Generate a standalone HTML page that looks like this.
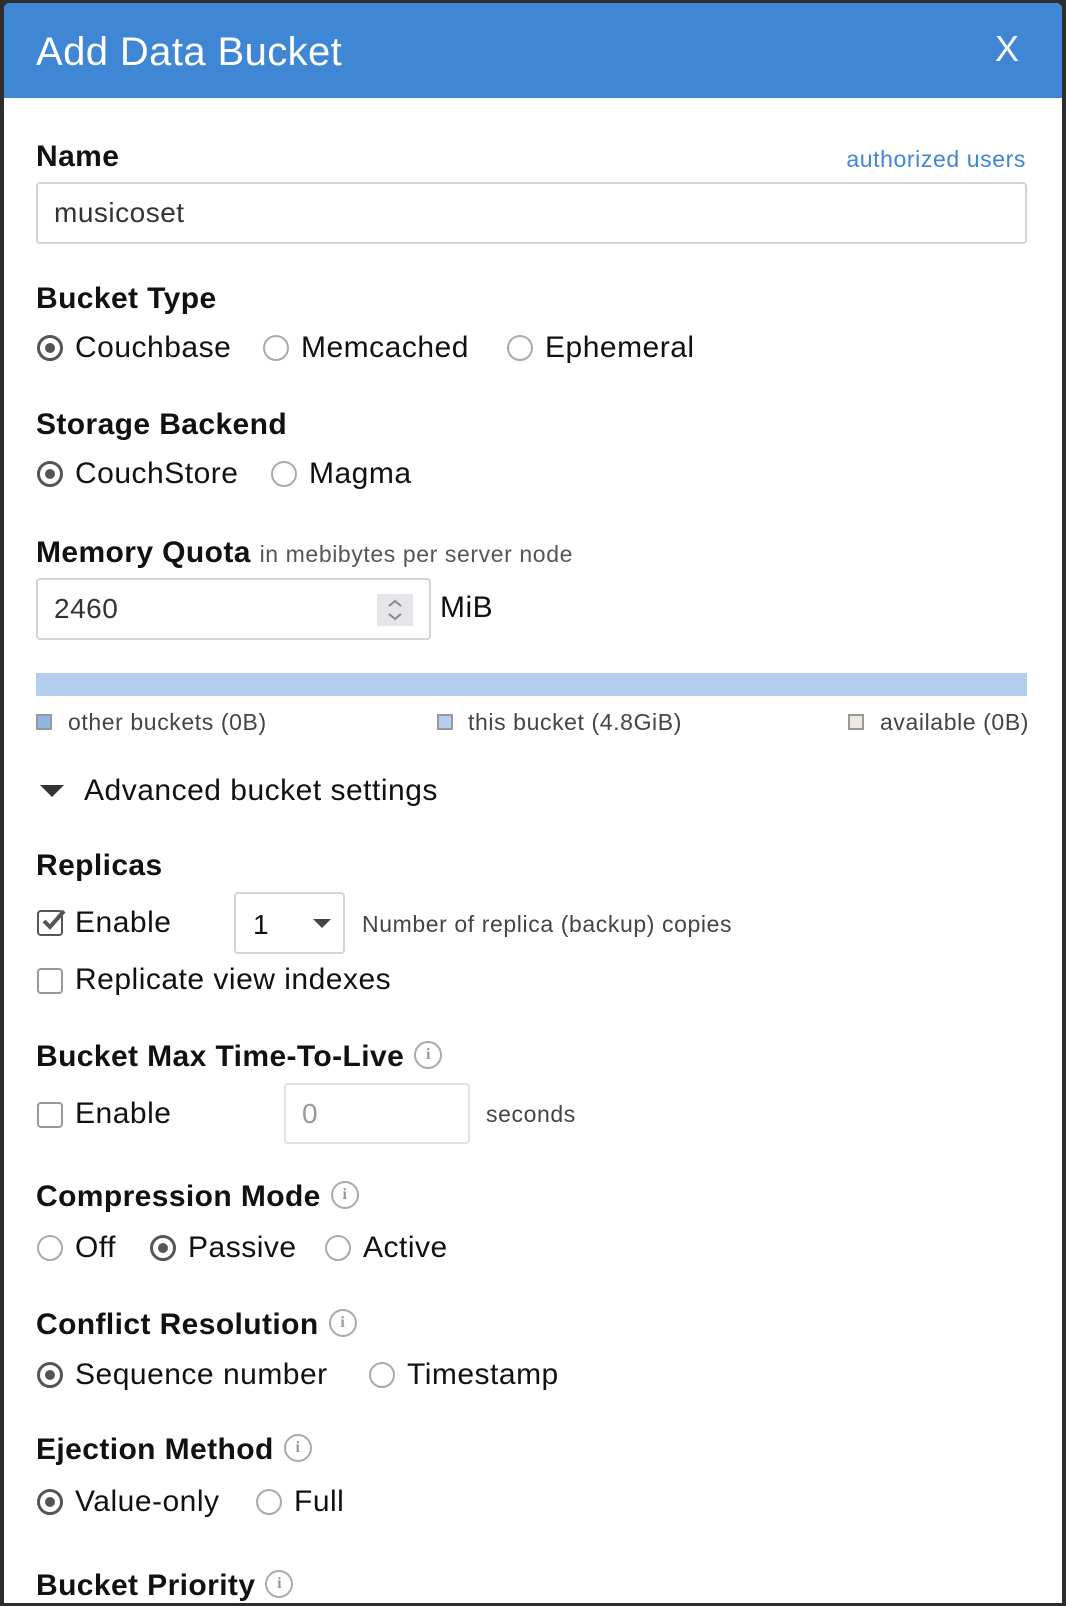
<!DOCTYPE html>
<html><head><meta charset="utf-8"><style>
html,body{margin:0;padding:0;width:1066px;height:1576px;overflow:hidden;background:#2d2d2d;font-family:"Liberation Sans",sans-serif;}
#dlg{position:absolute;left:4px;top:3px;width:1058px;height:1600px;background:#fff;border-radius:6px 6px 0 0;overflow:hidden;}
#hdr{position:absolute;left:0;top:0;width:1058px;height:95px;background:#3f87d4;}
.a{position:absolute;white-space:nowrap;height:40px;line-height:40px;}
.t{font-size:40px;color:#fff;letter-spacing:0.4px;}
.l{font-size:30px;font-weight:bold;color:#111;letter-spacing:0.4px;}
.o{font-size:30px;color:#111;letter-spacing:0.5px;}
.s{font-size:23px;color:#444;letter-spacing:0.6px;}
.r{position:absolute;width:22px;height:22px;border:2px solid #aaa;border-radius:50%;box-sizing:content-box;}
.r.c{border:3px solid #555;width:20px;height:20px;}
.r.c:after{content:"";position:absolute;left:5px;top:5px;width:10px;height:10px;border-radius:50%;background:#555;}
.cb{position:absolute;width:22px;height:22px;border:2px solid #999;border-radius:4px;}
.inp{position:absolute;border:2px solid #d4d4d4;border-radius:4px;box-sizing:border-box;background:#fff;}
.i{display:inline-block;vertical-align:middle;margin-left:10px;margin-top:-6px;width:24px;height:24px;border:2px solid #aaa;border-radius:50%;color:#999;font-size:16px;font-weight:bold;text-align:center;line-height:24px;font-family:"Liberation Serif",serif;letter-spacing:0;}
.sq{position:absolute;width:16px;height:16px;border:2px solid #999;box-sizing:border-box;}
</style></head><body>
<div id="dlg">
<div id="hdr"></div>
</div>
<div class="a t" style="left:36px;top:32px;">Add Data Bucket</div>
<div class="a t" style="left:995px;top:29px;font-size:36px;">X</div>

<div class="a l" style="left:36px;top:137px;">Name</div>
<div class="a s" style="right:40px;top:139px;color:#3f87d4;">authorized users</div>
<div class="inp" style="left:36px;top:182px;width:991px;height:62px;"></div>
<div class="a o" style="left:54px;top:193px;font-size:28px;color:#333;">musicoset</div>

<div class="a l" style="left:36px;top:279px;">Bucket Type</div>
<div class="r c" style="left:37px;top:335px;"></div><div class="a o" style="left:75px;top:328px;">Couchbase</div>
<div class="r" style="left:263px;top:335px;"></div><div class="a o" style="left:301px;top:328px;">Memcached</div>
<div class="r" style="left:507px;top:335px;"></div><div class="a o" style="left:545px;top:328px;">Ephemeral</div>

<div class="a l" style="left:36px;top:405px;">Storage Backend</div>
<div class="r c" style="left:37px;top:461px;"></div><div class="a o" style="left:75px;top:454px;">CouchStore</div>
<div class="r" style="left:271px;top:461px;"></div><div class="a o" style="left:309px;top:454px;">Magma</div>

<div class="a l" style="left:36px;top:533px;">Memory Quota <span style="font-size:23px;font-weight:normal;color:#555;letter-spacing:0.6px;">in mebibytes per server node</span></div>
<div class="inp" style="left:36px;top:578px;width:395px;height:62px;"></div>
<div class="a o" style="left:54px;top:589px;font-size:28px;color:#333;">2460</div>
<div style="position:absolute;left:377px;top:594px;width:36px;height:32px;background:#e6e6ea;"></div>
<svg style="position:absolute;left:377px;top:594px" width="36" height="32"><path d="M12 12 L18 7 L24 12 M12 20 L18 25 L24 20" fill="none" stroke="#888" stroke-width="2"/></svg>
<div class="a o" style="left:440px;top:588px;">MiB</div>

<div style="position:absolute;left:36px;top:673px;width:991px;height:23px;background:#b3cfed;"></div>
<div class="sq" style="left:36px;top:714px;background:#8eb7e6;"></div><div class="a s" style="left:68px;top:702px;">other buckets (0B)</div>
<div class="sq" style="left:437px;top:714px;background:#b3cfed;"></div><div class="a s" style="left:468px;top:702px;">this bucket (4.8GiB)</div>
<div class="sq" style="left:848px;top:714px;background:#eee8de;"></div><div class="a s" style="left:880px;top:702px;">available (0B)</div>

<svg style="position:absolute;left:40px;top:785px" width="24" height="14"><path d="M0 0 L24 0 L12 12 Z" fill="#333"/></svg>
<div class="a o" style="left:84px;top:771px;">Advanced bucket settings</div>

<div class="a l" style="left:36px;top:846px;">Replicas</div>
<div class="cb" style="left:37px;top:910px;border-color:#555;"></div>
<svg style="position:absolute;left:37px;top:905px" width="30" height="30"><path d="M7 16 L13 22 L27 6" fill="none" stroke="#555" stroke-width="4"/></svg>
<div class="a o" style="left:75px;top:903px;">Enable</div>
<div class="inp" style="left:234px;top:892px;width:111px;height:62px;"></div>
<div class="a o" style="left:253px;top:905px;font-size:28px;">1</div>
<svg style="position:absolute;left:313px;top:919px" width="18" height="10"><path d="M0 0 L18 0 L9 9 Z" fill="#444"/></svg>
<div class="a s" style="left:362px;top:904px;">Number of replica (backup) copies</div>
<div class="cb" style="left:37px;top:968px;"></div><div class="a o" style="left:75px;top:960px;">Replicate view indexes</div>

<div class="a l" style="left:36px;top:1037px;">Bucket Max Time-To-Live<span class="i">i</span></div>
<div class="cb" style="left:37px;top:1102px;"></div><div class="a o" style="left:75px;top:1094px;">Enable</div>
<div class="inp" style="left:284px;top:1083px;width:186px;height:61px;border-color:#e2e2e2;"></div>
<div class="a o" style="left:302px;top:1094px;font-size:28px;color:#999;">0</div>
<div class="a s" style="left:486px;top:1094px;">seconds</div>

<div class="a l" style="left:36px;top:1177px;">Compression Mode<span class="i">i</span></div>
<div class="r" style="left:37px;top:1235px;"></div><div class="a o" style="left:75px;top:1228px;">Off</div>
<div class="r c" style="left:150px;top:1235px;"></div><div class="a o" style="left:188px;top:1228px;">Passive</div>
<div class="r" style="left:325px;top:1235px;"></div><div class="a o" style="left:363px;top:1228px;">Active</div>

<div class="a l" style="left:36px;top:1305px;">Conflict Resolution<span class="i">i</span></div>
<div class="r c" style="left:37px;top:1362px;"></div><div class="a o" style="left:75px;top:1355px;">Sequence number</div>
<div class="r" style="left:369px;top:1362px;"></div><div class="a o" style="left:407px;top:1355px;">Timestamp</div>

<div class="a l" style="left:36px;top:1430px;">Ejection Method<span class="i">i</span></div>
<div class="r c" style="left:37px;top:1489px;"></div><div class="a o" style="left:75px;top:1482px;">Value-only</div>
<div class="r" style="left:256px;top:1489px;"></div><div class="a o" style="left:294px;top:1482px;">Full</div>

<div class="a l" style="left:36px;top:1566px;">Bucket Priority<span class="i">i</span></div>
</body></html>
